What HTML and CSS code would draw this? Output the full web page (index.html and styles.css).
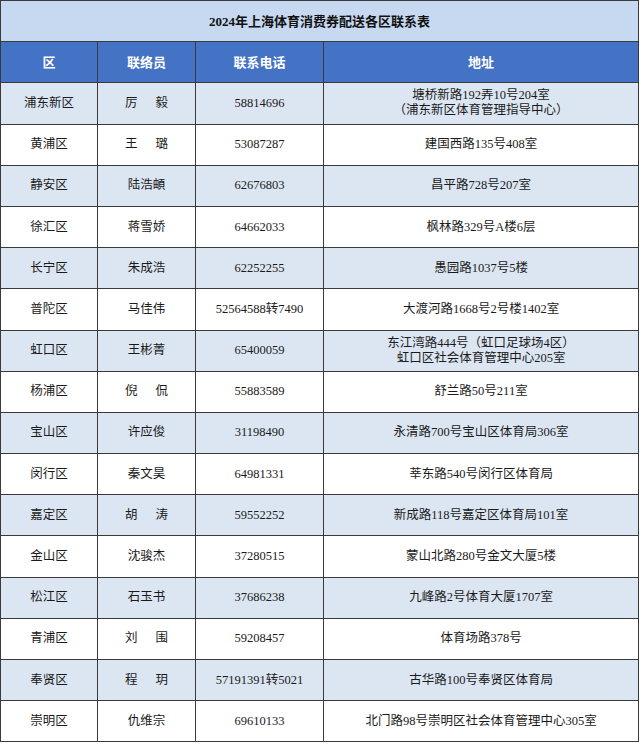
FILE: index.html
```html
<!DOCTYPE html>
<html lang="zh-CN">
<head>
<meta charset="utf-8">
<title>2024年上海体育消费券配送各区联系表</title>
<link rel="stylesheet" href="styles.css">
</head>
<body>
<table class="sheet">
  <colgroup>
    <col class="c1"><col class="c2"><col class="c3"><col class="c4">
  </colgroup>
  <tr class="title"><td colspan="4">2024年上海体育消费券配送各区联系表</td></tr>
  <tr class="head"><td>区</td><td>联络员</td><td>联系电话</td><td>地址</td></tr>
  <tr class="alt"><td>浦东新区</td><td><span class="gap">厉</span>毅</td><td>58814696</td><td><div class="two">塘桥新路192弄10号204室<br>（浦东新区体育管理指导中心）</div></td></tr>
  <tr><td>黄浦区</td><td><span class="gap">王</span>璐</td><td>53087287</td><td>建国西路135号408室</td></tr>
  <tr class="alt"><td>静安区</td><td>陆浩頔</td><td>62676803</td><td>昌平路728号207室</td></tr>
  <tr><td>徐汇区</td><td>蒋雪娇</td><td>64662033</td><td>枫林路329号A楼6层</td></tr>
  <tr class="alt"><td>长宁区</td><td>朱成浩</td><td>62252255</td><td>愚园路1037号5楼</td></tr>
  <tr><td>普陀区</td><td>马佳伟</td><td>52564588转7490</td><td>大渡河路1668号2号楼1402室</td></tr>
  <tr class="alt"><td>虹口区</td><td>王彬菁</td><td>65400059</td><td><div class="two">东江湾路444号（虹口足球场4区）<br>虹口区社会体育管理中心205室</div></td></tr>
  <tr><td>杨浦区</td><td><span class="gap">倪</span>侃</td><td>55883589</td><td>舒兰路50号211室</td></tr>
  <tr class="alt"><td>宝山区</td><td>许应俊</td><td>31198490</td><td>永清路700号宝山区体育局306室</td></tr>
  <tr><td>闵行区</td><td>秦文昊</td><td>64981331</td><td>莘东路540号闵行区体育局</td></tr>
  <tr class="alt"><td>嘉定区</td><td><span class="gap">胡</span>涛</td><td>59552252</td><td>新成路118号嘉定区体育局101室</td></tr>
  <tr><td>金山区</td><td>沈骏杰</td><td>37280515</td><td>蒙山北路280号金文大厦5楼</td></tr>
  <tr class="alt"><td>松江区</td><td>石玉书</td><td>37686238</td><td>九峰路2号体育大厦1707室</td></tr>
  <tr><td>青浦区</td><td><span class="gap">刘</span>围</td><td>59208457</td><td>体育场路378号</td></tr>
  <tr class="alt"><td>奉贤区</td><td><span class="gap">程</span>玥</td><td>57191391转5021</td><td>古华路100号奉贤区体育局</td></tr>
  <tr><td>崇明区</td><td>仇维宗</td><td>69610133</td><td>北门路98号崇明区社会体育管理中心305室</td></tr>
</table>
</body>
</html>
```
FILE: styles.css
```css
html, body {
  margin: 0;
  padding: 0;
  background: #ffffff;
}
.sheet {
  border-collapse: collapse;
  table-layout: fixed;
  width: 638px;
  font-family: "Liberation Serif", "Noto Sans CJK SC", serif;
  font-size: 12.5px;
  color: #1a1a1a;
}
.c1 { width: 97px; }
.c2 { width: 98px; }
.c3 { width: 128px; }
.c4 { width: 315px; }
.sheet td {
  border: 1px solid #3a3a3a;
  height: 40.2px;
  padding: 0;
  text-align: center;
  vertical-align: middle;
  line-height: 15px;
  background: #ffffff;
  white-space: nowrap;
}
.sheet tr.alt td { background: #dce6f2; }
.sheet tr.title td {
  background: #c6d9f1;
  font-weight: bold;
  font-size: 13px;
  color: #111111;
}
.sheet tr.head td {
  background: #4472c4;
  color: #ffffff;
  font-weight: bold;
  font-size: 13px;
}
.gap { margin-right: 18px; }
.two { line-height: 15px; }
```
